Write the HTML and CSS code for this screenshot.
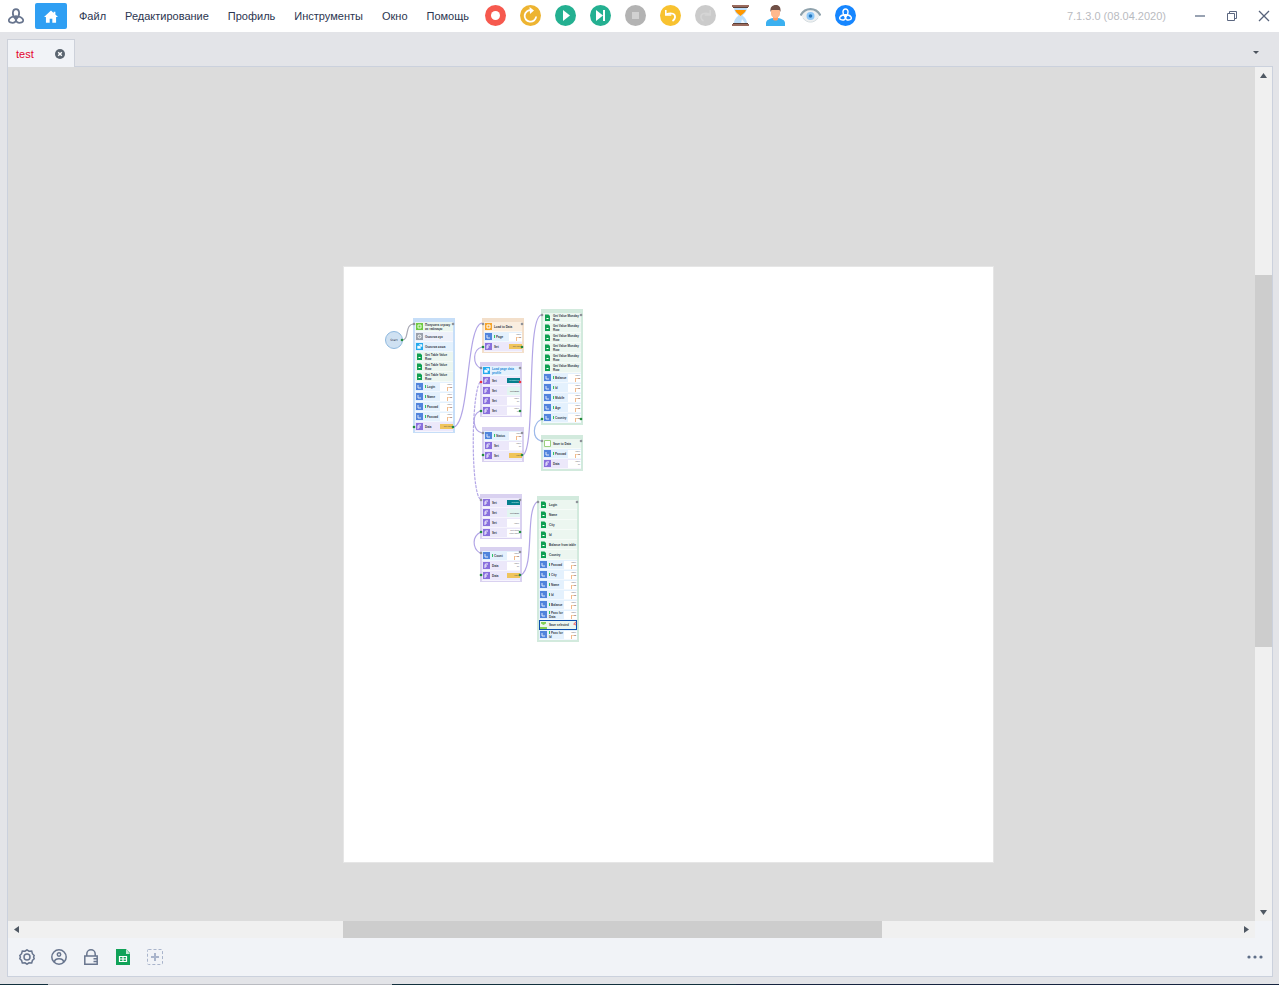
FILE: index.html
```html
<!DOCTYPE html>
<html lang="ru">
<head>
<meta charset="utf-8">
<title>test</title>
<link rel="stylesheet" href="styles.css">
</head>
<body>
<svg class="defs" aria-hidden="true">
  <symbol id="knot" viewBox="0 0 20 20"><g fill="none" stroke="currentColor" stroke-width="2.200"><path d="M10 14C4 9 5.500 1.500 10 1.500S16 9 10 14z"/><path d="M10 10.500C12 17.500 7 19.500 3 18S1 10.500 10 10.500z"/><path d="M10 10.500C8 17.500 13 19.500 17 18S19 10.500 10 10.500z"/></g></symbol>
</svg>
<header class="titlebar">
  <svg class="logo" role="img" aria-label="Логотип"><use href="#knot"/></svg>
  <button class="home" aria-label="Домой"><svg viewBox="0 0 16 14" width="14" height="13"><path fill="#fff" d="M8 0 0 7.500h2.200V14h4.300V9.500h3V14h4.300V7.500H16L13 4.700V1.500h-2v1.400z"/></svg></button>
  <nav class="menu">
    <button>Файл</button><button>Редактирование</button><button>Профиль</button><button>Инструменты</button><button>Окно</button><button>Помощь</button>
  </nav>
  <div class="tools">
    <button aria-label="Запись"><svg viewBox="0 0 21 21"><circle cx="10.500" cy="10.500" r="10.500" fill="#f6594e"/><circle cx="10.500" cy="10.500" r="4.500" fill="#fff"/></svg></button>
    <button aria-label="Перезапуск"><svg viewBox="0 0 21 21"><circle cx="10.500" cy="10.500" r="10.500" fill="#edb431"/><path d="M11.500 5.200A5.800 5.800 0 1 0 16.200 11.500" fill="none" stroke="#fff" stroke-width="1.800"/><path d="M9.500 2l4.500 3.400-4 3.600z" fill="#fff"/></svg></button>
    <button aria-label="Пуск"><svg viewBox="0 0 21 21"><circle cx="10.500" cy="10.500" r="10.500" fill="#24b091"/><path d="M8 5l7 5.500L8 16z" fill="#fff"/></svg></button>
    <button aria-label="Шаг"><svg viewBox="0 0 21 21"><circle cx="10.500" cy="10.500" r="10.500" fill="#24b091"/><path d="M6 5l7 5.500L6 16zM13 5h2v11h-2z" fill="#fff"/></svg></button>
    <button aria-label="Стоп"><svg viewBox="0 0 21 21"><circle cx="10.500" cy="10.500" r="10.500" fill="#b3b3b3"/><path d="M7 7h7v7H7z" fill="#d1d1d1"/></svg></button>
    <button aria-label="Отменить"><svg viewBox="0 0 21 21"><circle cx="10.500" cy="10.500" r="10.500" fill="#f8c230"/><path d="M6 9.300c6-2.300 9.500-.3 9 3.200-.2 1.500-1 2.500-2.500 3.500" fill="none" stroke="#fff" stroke-width="1.800"/><path d="M5.800 5v5h5.500" fill="none" stroke="#fff" stroke-width="1.600"/></svg></button>
    <button aria-label="Повторить" disabled><svg viewBox="0 0 21 21"><circle cx="10.500" cy="10.500" r="10.500" fill="#cbcbcb"/><path d="M15 9.300c-6-2.300-9.500-.3-9 3.200.2 1.500 1 2.500 2.500 3.500M15.200 5v5H9.700" fill="none" stroke="#d5d5d5" stroke-width="1.600"/></svg></button>
    <button aria-label="Ожидание"><svg viewBox="0 0 21 21"><path d="M4 2h13c0 5-2.500 6.500-4.500 8.500C14.500 12.500 17 14 17 19H4c0-5 2.500-6.500 4.500-8.500C6.500 8.500 4 7 4 2z" fill="#bbdefb"/><path d="M5 5h11c-1 3-4 4-5.500 6C9 9 6 8 5 5z" fill="#ff9800"/><path d="M12 14l3 4h-4z" fill="#eef7ff"/><path d="M2 0h17v2H2zM2 19h17v2H2z" fill="#9a6b5e"/><path d="M3 2h15v1H3zM3 18h15v1H3z" fill="#5d4037"/></svg></button>
    <button aria-label="Пользователь"><svg viewBox="0 0 21 21"><path d="M1 21v-3c0-3 4-5 9.500-5s9.500 2 9.500 5v3z" fill="#3bb0f0"/><path d="M8 10h5v4c0 2-5 2-5 0z" fill="#ff9b65"/><path d="M6 4h9v5c0 2-2 4-4.500 4S6 11 6 9z" fill="#ffb98d"/><path d="M5.500 7C5 2 7 0 11 0c3 0 5 2 4.500 7L14.500 5h-8z" fill="#705046"/></svg></button>
    <button aria-label="Просмотр"><svg viewBox="0 0 21 21"><path d="M1 10c5-6 14-6 19 0-3 6-5 7-9.500 7S4 16 1 10z" fill="#eef0f1"/><path d="M.5 10.500C5 2 16 2 20.500 10.500" fill="none" stroke="#8fa2ac" stroke-width="2.200"/><path d="M3 13c4 5.500 11 5.500 15 0" fill="none" stroke="#d5dde1"/><circle cx="10.500" cy="11" r="4" fill="#8ec8f8"/><circle cx="10.500" cy="11" r="1.800" fill="#2878be"/></svg></button>
    <button aria-label="Сервис" class="service"><svg viewBox="0 0 21 21"><circle cx="10.500" cy="10.500" r="10.500" fill="#1686ff"/><use href="#knot" x="4" y="3" width="13" height="13"/></svg></button>
  </div>
  <span class="version">7.1.3.0 (08.04.2020)</span>
  <div class="window-controls">
    <button aria-label="Свернуть"><svg viewBox="0 0 12 12"><path d="M1 6h10" stroke="#98a2b2" stroke-width="2"/></svg></button>
    <button aria-label="Восстановить"><svg viewBox="0 0 12 12" fill="none" stroke="#5b6780"><path d="M1.500 3.500h7v7h-7zM3.500 3.500v-2h7v7h-2"/></svg></button>
    <button aria-label="Закрыть"><svg viewBox="0 0 12 12" fill="none" stroke="#56627a" stroke-width="1.300"><path d="M1 1l10 10M11 1L1 11"/></svg></button>
  </div>
</header>
<div class="tabs">
  <div class="tab"><span>test</span><button aria-label="Закрыть вкладку"><svg viewBox="0 0 10 10" width="10" height="10"><circle cx="5" cy="5" r="5" fill="#5b6570"/><path d="M3.200 3.200l3.600 3.600M6.800 3.200L3.200 6.800" stroke="#fff" stroke-width="1.400"/></svg></button></div>
  <button class="tab-list" aria-label="Список вкладок"><svg viewBox="0 0 6 3" width="6" height="3"><path d="M0 0h6L3 3z" fill="#4c535d"/></svg></button>
</div>
<main class="panel">
  <div class="workspace">
    <div class="canvas">
      <div class="sheet" id="sheet">
        <div class="start">Start</div>
      </div>
    </div>
    <div class="bar vertical"><svg viewBox="0 0 7 5"><path d="M3.500 0L7 5H0z"/></svg><div class="track"><div class="thumb"></div></div><svg viewBox="0 0 7 5"><path d="M0 0h7L3.500 5z"/></svg></div>
    <div class="bar horizontal"><svg viewBox="0 0 5 7"><path d="M5 0v7L0 3.500z"/></svg><div class="track"><div class="thumb"></div></div><svg viewBox="0 0 5 7"><path d="M0 0l5 3.500L0 7z"/></svg></div>
  </div>
  <footer class="dock">
    <button aria-label="Настройки"><svg viewBox="0 0 16 16" fill="none" stroke="#68758e" stroke-width="1.500"><path d="M8 .8l2 1.400 2.700-.2.700 2.700L15.200 6.500 14.600 8l.6 1.800-1.800 1.700-.7 2.500-2.700-.2-2 1.400-2-1.400-2.700.2-.7-2.500L.8 9.800 1.400 8 .8 6.500l1.800-1.800L3.300 2l2.700.2z"/><circle cx="8" cy="8" r="3"/></svg></button>
    <button aria-label="Профиль"><svg viewBox="0 0 16 16" fill="none" stroke="#68758e" stroke-width="1.500"><circle cx="8" cy="8" r="7.200"/><circle cx="8" cy="5.500" r="1.700"/><path d="M3.500 13c0-4.500 9-4.500 9 0"/></svg></button>
    <button aria-label="Прокси"><svg viewBox="0 0 16 16" fill="none" stroke="#68758e" stroke-width="1.500"><path d="M1.800 7h12.400v8.200H1.800zM3.800 7V5a4.200 4.200 0 0 1 8.400 0v2M10.500 9.800H14M10.500 12.500H14"/></svg></button>
    <button aria-label="Таблица"><svg viewBox="0 0 16 16"><path d="M1 0h10l4 4v12H1z" fill="#10a258"/><path d="M11 0l4 5h-4z" fill="#c5e8d4"/><path d="M4.500 7.500h7v5h-7zM8 7.500v5M4.500 10h7" fill="none" stroke="#fff" stroke-width="1.200"/></svg></button>
    <button aria-label="Добавить"><svg viewBox="0 0 16 16" fill="none" stroke="#a9b4cb"><rect x=".5" y=".5" width="15" height="15" rx="1" stroke-dasharray="3 2"/><path d="M8 4v8M4 8h8" stroke-width="2"/></svg></button>
    <button class="more" aria-label="Ещё"><svg viewBox="0 0 16 16" fill="#5f6e88"><circle cx="2" cy="8" r="1.600"/><circle cx="8" cy="8" r="1.600"/><circle cx="14" cy="8" r="1.600"/></svg></button>
  </footer>
</main>
<div class="edge"></div>
<script src="nodes.js"></script>
</body>
</html>
```
FILE: styles.css
```css
* { box-sizing: border-box; }
body { margin: 0; height: 100vh; overflow: hidden; display: flex; flex-direction: column; background: #e3e4e8; font: 11px/16px "Liberation Sans", sans-serif; color: #2b3550; }
button { border: 0; padding: 0; margin: 0; background: none; font: inherit; color: inherit; display: flex; align-items: center; justify-content: center; }
svg { display: block; }
.defs { position: absolute; width: 0; height: 0; }

.titlebar { flex: none; height: 32px; display: flex; align-items: center; background: #fff; padding: 0 9px 0 8px; }
.logo { width: 16px; height: 16px; color: #68758e; }
.home { width: 32px; height: 26px; margin-left: 11px; border-radius: 2px; background: #2f9ff3; }
.menu { display: flex; justify-content: space-between; margin-left: 12px; width: 390px; }
.tools { display: flex; gap: 14px; margin-left: 16px; padding-bottom: 1px; }
.tools svg { width: 21px; height: 21px; }
.service { color: #fff; }
.version { margin-left: auto; color: #b9bbbf; }
.window-controls { display: flex; gap: 20px; margin-left: 28px; }
.window-controls svg { width: 12px; height: 12px; }

.tabs { flex: none; height: 34px; display: flex; align-items: flex-end; justify-content: space-between; padding: 0 19px 0 7px; }
.tab { position: relative; z-index: 1; display: flex; align-items: center; justify-content: space-between; width: 68px; height: 28px; margin-bottom: -1px; padding: 0 9px 0 8px; background: #f1f3f7; border: 1px solid #cdd1da; border-bottom: 0; color: #e4032e; }
.tab-list { height: 28px; width: 8px; }

.panel { flex: 1; min-height: 0; display: flex; flex-direction: column; margin: 0 6px 7px 7px; border: 1px solid #cbd1dd; background: #f1f3f7; }
.workspace { flex: 1; min-height: 0; display: grid; grid-template-columns: 1fr 17px; grid-template-rows: 1fr 17px; }
.canvas { position: relative; overflow: hidden; background: #dcdcdc; }
.bar { display: flex; align-items: center; background: #f0f0f0; }
.bar svg { flex: none; fill: #4f5863; }
.track { flex: 1; display: flex; }
.thumb { background: #cdcdcd; }
.vertical { flex-direction: column; padding: 6px 0; }
.vertical svg { width: 7px; height: 5px; }
.vertical .track { width: 17px; flex-direction: column; padding-top: 197px; }
.vertical .thumb { height: 372px; }
.horizontal { padding: 0 6px; }
.horizontal svg { width: 5px; height: 7px; }
.horizontal .track { height: 17px; padding-left: 324px; }
.horizontal .thumb { width: 539px; }

.dock { flex: none; height: 38px; display: flex; align-items: center; gap: 16px; padding: 0 9px 0 11px; }
.dock svg { width: 16px; height: 16px; }
.more { margin-left: auto; }
.edge { flex: none; height: 1px; background: linear-gradient(90deg, #12303d 48px, #b9bbc1 48px 392px, #12303d 392px 736px, #16243f 736px); }

.sheet { position: absolute; left: 335px; top: 199px; width: 651px; height: 597px; background: #fff; border: 1px solid #e6e6e6; }
.wires { position: absolute; inset: -1px; width: 651px; height: 597px; }
.start { position: absolute; left: 41px; top: 64px; width: 18px; height: 18px; border: 1px solid #8fb9df; border-radius: 50%; background: #cfe1f2; font: 3px/16px "DejaVu Sans", sans-serif; text-align: center; }
.node { position: absolute; width: 42px; padding: 4px 2px 1px; font: bold 3px/4px "Liberation Sans", sans-serif; color: #333a48; }
.node.blue { background: #c6def8; }
.node.orange { background: #f3dfca; }
.node.violet { background: #d9d1f0; }
.node.green { background: #d2eadd; padding-bottom: 2px; }
.row { display: flex; align-items: center; height: 10px; padding-left: 1px; border-bottom: 1px solid #ffffff80; }
.row .icon { flex: none; width: 7px; height: 7px; margin-right: 2px; }
.row .label { flex: 1; white-space: pre; }
.row .value { flex: none; width: 13px; height: 8px; padding-right: 1px; background: #fff; font-weight: normal; font-size: 2px; line-height: 3px; text-align: right; white-space: pre; color: #55505a; }
.row .value.two { background: linear-gradient(#f2ba8a, #f2ba8a) 7px 4px / 1px 4px no-repeat, linear-gradient(#f6d3b4, #f6d3b4) 7px 4px / 5px 1px no-repeat, #fff; }
.row .value.gold { height: 5px; background: #efc45c; line-height: 5px; }
.row .value.teal { height: 5px; background: #05808d; color: #d8f2f2; line-height: 5px; }
.row .value.mint { background: #e2f5f1; font-weight: bold; line-height: 8px; }
.greenrow { background: #ecf6f0; }
.sheetrow { background: #ecf6f0; }
.bluerow { background: #e4f1fd; }
.violetrow { background: #ece8fa; }
.greyrow { background: #eef1fa; }
.orangerow { background: #faeee0; }
.variable .label::before { content: ""; display: inline-block; width: 1px; height: 3px; margin-right: 1px; background: #2fc46b; }
.row.selected { border: 1px solid #0c4fae; padding-left: 0; }
.linked .label { color: #2388d8; }
```
FILE: nodes.js
```
const PALETTE = { b: '#5184dc', v: '#8970dd', l: '#6fca45', o: '#f5a42c', c: '#24a9ee', g: '#9aa0ab' };
const GLYPHS = {
  b: '<path d="M2 2v3h3" fill="none" stroke="#fff" stroke-width=".8"/>',
  v: '<path d="M2 6V3a1 1 0 0 1 1-1h2M2 4h2" fill="none" stroke="#fff" stroke-width=".9"/>',
  l: '<path d="M2 2h3v3H2z" fill="none" stroke="#e8ffe0"/>',
  o: '<path d="M2 2h3v3H2z" fill="none" stroke="#fff"/>',
  c: '<path d="M1.500 3h3v2.500h-3zM3 1.500h3V4" fill="#fff" stroke="#c8ecff" stroke-width=".6"/>',
  g: '<circle cx="3.500" cy="3.500" r="1.500" fill="none" stroke="#fff"/>'
};

function icon(kind) {
  if (kind === 's') return '<path d="M1 .5h3.500l1.500 1.500v5H1z" fill="#10a052"/><path d="M2.500 4.500h2" stroke="#fff"/>';
  if (kind === 'w') return '<path d="M.5.500h6v6h-6z" fill="#fff" stroke="#9bd07f"/>';
  if (kind === 'h') return '<path d="M1 0h5v1.500L3.500 3 1 1.500zM0 5h7v2H0z" fill="#83ce54"/>';
  return `<rect width="7" height="7" fill="${PALETTE[kind]}"/>${GLYPHS[kind]}`;
}

// Row: [icon, background, label, value text, value style]
const table = (text) => ['s', 'sheet', text];
const box = (text, value = 'Value\n12', style = 'two') => ['b', 'blue variable', text, value, style];
const cond = (text, value = 'Value\n10', style = '') => ['v', 'violet', text, value, style];

const NODES = [
  { x: 413, y: 318, tone: 'blue', rows: [['l', 'green', 'Получить строку\nиз таблицы'], ['g', 'grey', 'Очистка кук'], ['c', 'blue', 'Очистка кэша'], table('Get Table Value\nRow'), table('Get Table Value\nRow'), table('Get Table Value\nRow'), box('Login'), box('Name'), box('Passwd'), box('Passwd'), cond('Data', 'Set value', 'gold')] },
  { x: 482, y: 318, tone: 'orange', rows: [['o', 'orange', 'Load to Data'], box('Page'), cond('Set', 'Set value', 'gold')] },
  { x: 480, y: 362, tone: 'violet', rows: [['c', 'blue linked', 'Load page data\nprofile'], cond('Set', 'Registered', 'teal'), cond('Set', 'Get value', 'mint'), cond('Set'), cond('Set')] },
  { x: 482, y: 427, tone: 'violet', rows: [box('Status'), cond('Set'), cond('Set', 'Value', 'gold')] },
  { x: 541, y: 309, tone: 'green', rows: [...Array.from({ length: 6 }, () => table('Get Value Monday\nRow')), box('Balance'), box('Id'), box('Mobile'), box('Age'), box('Country')] },
  { x: 541, y: 435, tone: 'green', rows: [['w', 'green', 'Save to Data'], box('Passwd'), cond('Data')] },
  { x: 480, y: 494, tone: 'violet', rows: [cond('Set', 'Register', 'teal'), cond('Set', 'Get value', 'mint'), cond('Set', '\nValue'), cond('Set', 'Get Items\nPlus Value')] },
  { x: 480, y: 547, tone: 'violet', rows: [box('Count'), cond('Data'), cond('Data', 'Value', 'gold')] },
  { x: 537, y: 496, tone: 'green', rows: [table('Login'), table('Name'), table('City'), table('Id'), table('Balance from table'), table('Country'), box('Passwd'), box('City'), box('Name'), box('Id'), box('Balance'), box('Pass for\nData'), ['h', 'green selected', 'Save selected'], box('Pass for\nId')] }
];

const WIRES = [
  [402, 340, 'C410 340 404 324 414 324', '#a9a9b5'],
  [454, 427, 'C470 422 466 325 482 323', '#b2a5e6'],
  [482, 347, 'C472 350 473 364 480 368', '#b2a5e6'],
  [480, 411, 'C471 415 473 431 482 433', '#b2a5e6'],
  [523, 455, 'C536 448 526 320 541 315', '#b2a5e6'],
  [542, 419, 'C532 424 532 438 541 441', '#9db9ea'],
  [480, 382, 'C471 395 471 490 480 499', '#b2a5e6', true],
  [481, 532, 'C472 536 472 548 480 553', '#b2a5e6'],
  [521, 575, 'C535 568 525 510 537 502', '#b2a5e6'],
  [576, 622, 'L574 624L576 625', '#f07a7a']
];

const PORTS = {
  '#8f9299': [[414, 324], [453, 324], [483, 324], [522, 324], [481, 368], [520, 368], [483, 433], [522, 433], [542, 315], [581, 315], [542, 441], [581, 441], [481, 500], [520, 500], [481, 553], [520, 552], [538, 502], [577, 502]],
  '#238b3e': [[402, 340], [414, 427], [453, 427], [483, 347], [522, 347], [481, 411], [520, 411], [483, 455], [522, 455], [542, 419], [581, 419], [481, 532], [520, 532], [481, 575], [520, 575]],
  '#ec3340': [[481, 382], [520, 382]]
};

const sheet = document.getElementById('sheet');
const ORIGIN = { x: 344, y: 267 };

for (const node of NODES) {
  const el = document.createElement('div');
  el.className = `node ${node.tone}`;
  el.style.left = `${node.x - ORIGIN.x}px`;
  el.style.top = `${node.y - ORIGIN.y}px`;
  el.innerHTML = node.rows.map(([kind, tone, label, value, style]) => {
    const classes = tone.replace(/^\w+/, (name) => `${name}row`);
    const output = value === undefined ? '' : `<div class="value ${style}">${value}</div>`;
    return `<div class="row ${classes}"><svg class="icon" viewBox="0 0 7 7">${icon(kind)}</svg><div class="label">${label}</div>${output}</div>`;
  }).join('');
  sheet.append(el);
}

const wires = WIRES.map(([x, y, curve, color, dashed]) =>
  `<path d="M${x} ${y}${curve}" fill="none" stroke="${color}" stroke-width="1.200" ${dashed ? 'stroke-dasharray="3 1"' : ''}/>`).join('');
const ports = Object.entries(PORTS).map(([color, points]) =>
  points.map(([x, y]) => `<circle cx="${x}" cy="${y}" r="1.300" fill="${color}"/>`).join('')).join('');
sheet.insertAdjacentHTML('beforeend', `<svg class="wires" viewBox="343 266 651 597">${wires}${ports}</svg>`);
```
